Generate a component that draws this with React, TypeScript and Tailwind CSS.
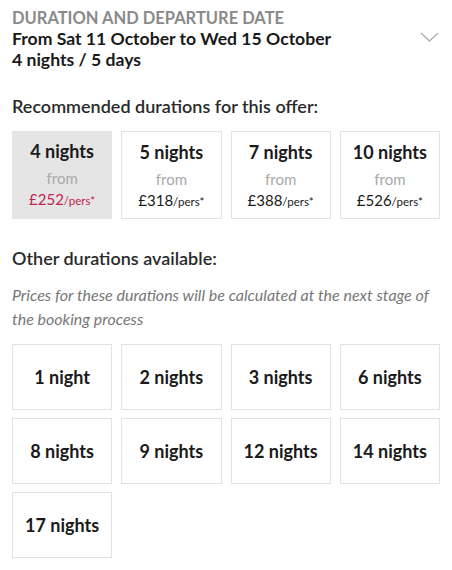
import React from 'react';

const recommended = [
  { label: '4 nights', price: '£252', active: true },
  { label: '5 nights', price: '£318' },
  { label: '7 nights', price: '£388' },
  { label: '10 nights', price: '£526' },
];

const others = ['1 night', '2 nights', '3 nights', '6 nights', '8 nights', '9 nights', '12 nights', '14 nights', '17 nights'];

const App = () => {
  return (
    <div className="bg-white px-3 pt-[7px] pb-3 text-[#1a1a1a]" style={{ fontFamily: 'Lato, "Noto Sans", sans-serif' }}>
      {/* Header */}
      <div className="flex items-start justify-between">
        <div>
          <div className="text-[16.5px] font-bold uppercase leading-[22px] text-[#8a8a8a]">Duration and departure date</div>
          <div className="text-[17.6px] font-bold leading-[20px]">From Sat 11 October to Wed 15 October</div>
          <div className="text-[17.6px] font-bold leading-[21px]">4 nights / 5 days</div>
        </div>
        <svg className="mt-[25px] mr-[1px]" width="19" height="10" viewBox="0 0 19 10" fill="none">
          <path d="M1 1l8.5 8 8.5-8" stroke="#b5b5b5" strokeWidth="1.6" />
        </svg>
      </div>

      {/* Recommended */}
      <h3 className="mt-[24px] text-[18px] font-semibold leading-[24px] text-[#2a2a2a]">Recommended durations for this offer:</h3>
      <div className="mt-[13px] grid grid-cols-4 gap-[9px]">
        {recommended.map((r) => (
          <div
            key={r.label}
            className={`flex h-[88px] flex-col items-center pt-[8px] ${r.active ? 'bg-[#e5e5e5]' : 'border border-[#e2e2e2] bg-white'}`}
          >
            <div className="text-[18px] font-bold leading-[24px]">{r.label}</div>
            <div className="mt-[5px] text-[15px] leading-[20px] text-[#a8a8a8]">from</div>
            <div className={`mt-[1px] leading-[20px] ${r.active ? 'text-[#c0244f]' : 'text-[#1a1a1a]'}`}>
              <span className="text-[15px]">{r.price}</span>
              <span className="text-[11.5px]">/pers*</span>
            </div>
          </div>
        ))}
      </div>

      {/* Others */}
      <h3 className="mt-[27px] text-[18px] font-semibold leading-[24px] text-[#2a2a2a]">Other durations available:</h3>
      <p className="mt-[13px] text-[16px] italic leading-[24px] text-[#777]">
        Prices for these durations will be calculated at the next stage of the booking process
      </p>
      <div className="mt-[13px] grid grid-cols-4 gap-x-[9px] gap-y-[8px]">
        {others.map((o) => (
          <div key={o} className="flex h-[66px] items-center justify-center border border-[#e2e2e2] text-[18px] font-bold">
            {o}
          </div>
        ))}
      </div>
    </div>
  );
};

export default App;
